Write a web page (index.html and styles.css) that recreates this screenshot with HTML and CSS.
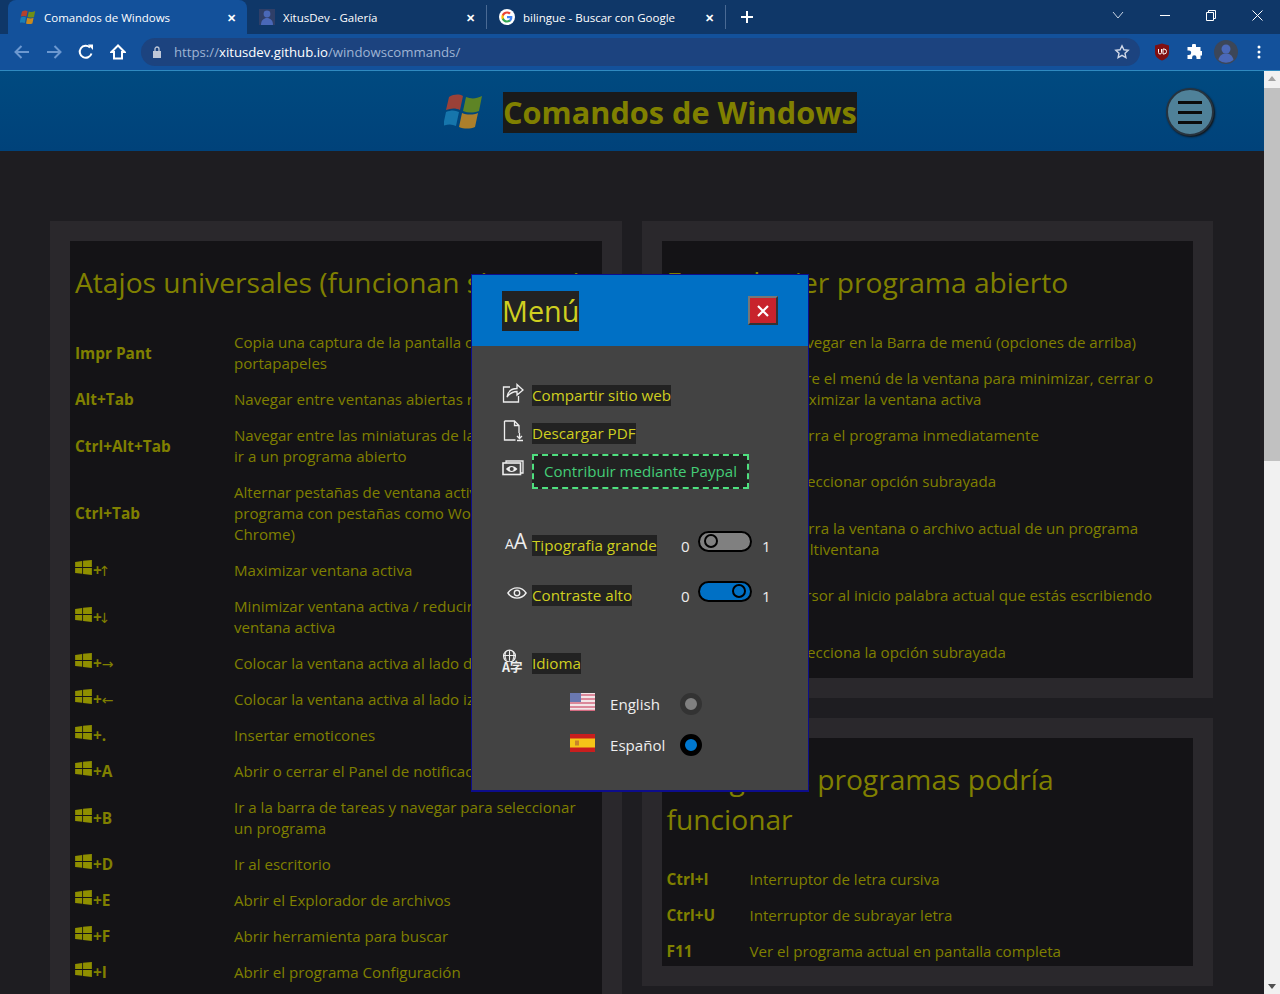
FILE: index.html
```html
<!DOCTYPE html>
<html lang="es">
<head>
    <meta charset="UTF-8">
    <meta name="viewport" content="width=device-width, initial-scale=1.0">
    <title>Comandos de Windows</title>
    <link rel="stylesheet" href="styles.css">
</head>
<body>
    <svg class="defs" width="0" height="0">
        <symbol id="winkey" viewBox="0 0 19 17">
            <path d="M0 2.2 8 1v7H0zM9 .9 19 0v8H9zM0 9h8v6.6L0 14.6zM9 9h10v8L9 15.8z"/>
        </symbol>
        <symbol id="winlogo" viewBox="0 0 40 38">
            <path fill="#b5412c" d="M5 5c5-3 10-3 14-1l-3 14c-4-2-9-2-14 0z"/>
            <path fill="#6f8f16" d="M22 5c5 2 10 2 16-1l-3 15c-6 2-11 2-16 0z"/>
            <path fill="#1a7fb5" d="M2 20c5-2 9-2 13 0l-3 14c-4-2-8-2-13 0z"/>
            <path fill="#c98a1e" d="M18 21c5 2 11 2 16 0l-3 14c-5 2-11 2-16 0z"/>
        </symbol>
    </svg>

    <div class="tabstrip">
        <div class="tab active">
            <svg class="favicon" viewBox="0 0 40 38"><use href="#winlogo"/></svg>
            <span class="tab-title">Comandos de Windows</span>
            <span class="tab-close">✕</span>
        </div>
        <div class="tab">
            <svg class="favicon" viewBox="0 0 16 16"><rect width="16" height="16" fill="#2f3f68"/><circle cx="8" cy="5" r="3.4" fill="#4a68b8"/><path fill="#4a68b8" d="M2 16c0-5 3-7 6-7s6 2 6 7z"/></svg>
            <span class="tab-title">XitusDev - Galería</span>
            <span class="tab-close">✕</span>
        </div>
        <div class="tab sep">
            <svg class="favicon" viewBox="0 0 18 18">
                <circle cx="9" cy="9" r="9" fill="#fff"/>
                <path fill="#4285f4" d="M15 9.2c0-.5 0-.9-.1-1.3H9v2.5h3.4c-.2.8-.6 1.4-1.3 1.9v1.6h2.1c1.2-1.1 1.8-2.8 1.8-4.7z"/>
                <path fill="#34a853" d="M9 15.3c1.7 0 3.1-.6 4.2-1.5l-2.1-1.6c-.6.4-1.3.6-2.1.6-1.6 0-3-1.1-3.5-2.6H3.3v1.6c1.1 2.1 3.2 3.5 5.7 3.5z"/>
                <path fill="#fbbc05" d="M5.5 10.200c-.3-.8-.3-1.600 0-2.400V6.200H3.300c-.8 1.700-.8 3.800 0 5.600z"/>
                <path fill="#ea4335" d="M9 5.200c.9 0 1.800.3 2.400.9l1.900-1.900C12.200 3.200 10.700 2.600 9 2.700c-2.500 0-4.600 1.400-5.700 3.500l2.200 1.600C6 6.300 7.400 5.200 9 5.200z"/>
            </svg>
            <span class="tab-title">bilingue - Buscar con Google</span>
            <span class="tab-close">✕</span>
        </div>
        <div class="new-tab">
            <svg width="14" height="14" viewBox="0 0 14 14"><path d="M7 1v12M1 7h12" stroke="#fff" stroke-width="2"/></svg>
        </div>
        <div class="win-controls">
            <svg width="12" height="8" viewBox="0 0 12 8"><path d="M1 1l5 6 5-6" fill="none" stroke="#c8d4e4"/></svg>
            <svg width="10" height="10" viewBox="0 0 10 10"><path d="M0 5.500h10" stroke="#fff"/></svg>
            <svg width="10" height="11" viewBox="0 0 10 11"><path d="M.5 2.500h7v8h-7zM2.500 2.500v-2h7v8h-2" fill="none" stroke="#fff"/></svg>
            <svg width="11" height="11" viewBox="0 0 11 11"><path d="M.5.5l10 10M10.500.5l-10 10" stroke="#fff"/></svg>
        </div>
    </div>

    <div class="toolbar">
        <div class="nav-icons">
            <svg width="16" height="14" viewBox="0 0 16 14"><path d="M15 7H2M7.500 1 1.500 7l6 6" fill="none" stroke="#6c98d0" stroke-width="2"/></svg>
            <svg width="16" height="14" viewBox="0 0 16 14"><path d="M1 7h13M8.500 1l6 6-6 6" fill="none" stroke="#6c98d0" stroke-width="2"/></svg>
            <svg width="16" height="16" viewBox="0 0 16 16"><path d="M13.500 9.500A6 6 0 1 1 12 3.500" fill="none" stroke="#fff" stroke-width="2"/><path fill="#fff" d="M10 .5h5v5.500z"/></svg>
            <svg width="16" height="16" viewBox="0 0 16 16"><path d="M8 1.500 1.500 8H4v6.500h8V8h2.500z" fill="none" stroke="#fff" stroke-width="2"/></svg>
        </div>
        <div class="omnibox">
            <svg class="lock" width="10" height="12" viewBox="0 0 10 12"><path fill="#c0c8d8" d="M1 5h8v7H1z"/><path d="M3 5V3a2 2 0 0 1 4 0v2" fill="none" stroke="#c0c8d8" stroke-width="1.300"/></svg>
            <span class="url">https://<b>xitusdev.github.io</b>/windowscommands/</span>
            <svg class="star" width="16" height="16" viewBox="0 0 16 16"><path d="M8 1.800l1.900 4 4.300.5-3.200 3 .9 4.300L8 11.400l-3.900 2.200.9-4.300-3.200-3 4.300-.5z" fill="none" stroke="#d0d8e8" stroke-width="1.400"/></svg>
        </div>
        <div class="ext-icons">
            <svg width="16" height="18" viewBox="0 0 16 18"><path fill="#800f12" d="M8 .5 15 2.500v7c0 4-3 6.500-7 8-4-1.500-7-4-7-8v-7z"/><path d="M4.500 6v3.500a1.500 1.500 0 0 0 3 0V6M9 6v5h1a2.500 2.500 0 0 0 0-5z" fill="none" stroke="#fff"/></svg>
            <svg width="16" height="16" viewBox="0 0 16 16"><path fill="#fff" d="M6 1.500a2 2 0 0 1 4 0V3h4.500v4H16a2.200 2.200 0 0 1 0 4.400h-1.500V15H10.500v-1.500a2.200 2.200 0 0 0-4.400 0V15H1.500v-4H3a2.200 2.200 0 0 0 0-4.400H1.500V3H6z"/></svg>
            <svg class="ext-avatar" width="24" height="24" viewBox="0 0 24 24"><circle cx="12" cy="12" r="12" fill="#3c4658"/><circle cx="12" cy="9" r="4.500" fill="#4a68b8"/><path fill="#4a68b8" d="M4.500 20c1-5 4-6.500 7.500-6.500s6.500 1.500 7.500 6.500a12 12 0 0 1-15 0z"/></svg>
            <svg width="4" height="14" viewBox="0 0 4 14"><circle cx="2" cy="2" r="1.500" fill="#fff"/><circle cx="2" cy="7" r="1.500" fill="#fff"/><circle cx="2" cy="12" r="1.500" fill="#fff"/></svg>
        </div>
    </div>

    <div class="viewport">
        <div class="page">
            <header class="site-header">
                <svg class="site-logo" viewBox="0 0 40 38"><use href="#winlogo"/></svg>
                <h1 class="site-title">Comandos de Windows</h1>
                <button class="burger"><span></span><span></span><span></span></button>
            </header>

            <main class="columns">
                <div class="column">
                    <section class="card">
                        <div class="card-inner">
                            <h2>Atajos universales (funcionan siempre)</h2>
                            <table class="keys wide">
                                <tr><th>Impr Pant</th><td>Copia una captura de la pantalla completa al<br>portapapeles</td></tr>
                                <tr><th>Alt+Tab</th><td>Navegar entre ventanas abiertas recientes</td></tr>
                                <tr><th>Ctrl+Alt+Tab</th><td>Navegar entre las miniaturas de las ventanas para<br>ir a un programa abierto</td></tr>
                                <tr><th>Ctrl+Tab</th><td>Alternar pestañas de ventana activa en un<br>programa con pestañas como Word, Firefox o<br>Chrome)</td></tr>
                                <tr><th><svg class="win"><use href="#winkey"/></svg>+<span class="arrow v">↑</span></th><td>Maximizar ventana activa</td></tr>
                                <tr><th><svg class="win"><use href="#winkey"/></svg>+<span class="arrow v">↓</span></th><td>Minimizar ventana activa / reducir tamaño de<br>ventana activa</td></tr>
                                <tr><th><svg class="win"><use href="#winkey"/></svg>+<span class="arrow">→</span></th><td>Colocar la ventana activa al lado derecho</td></tr>
                                <tr><th><svg class="win"><use href="#winkey"/></svg>+<span class="arrow">←</span></th><td>Colocar la ventana activa al lado izquierdo</td></tr>
                                <tr><th><svg class="win"><use href="#winkey"/></svg>+.</th><td>Insertar emoticones</td></tr>
                                <tr><th><svg class="win"><use href="#winkey"/></svg>+A</th><td>Abrir o cerrar el Panel de notificaciones</td></tr>
                                <tr><th><svg class="win"><use href="#winkey"/></svg>+B</th><td>Ir a la barra de tareas y navegar para seleccionar<br>un programa</td></tr>
                                <tr><th><svg class="win"><use href="#winkey"/></svg>+D</th><td>Ir al escritorio</td></tr>
                                <tr><th><svg class="win"><use href="#winkey"/></svg>+E</th><td>Abrir el Explorador de archivos</td></tr>
                                <tr><th><svg class="win"><use href="#winkey"/></svg>+F</th><td>Abrir herramienta para buscar</td></tr>
                                <tr><th><svg class="win"><use href="#winkey"/></svg>+I</th><td>Abrir el programa Configuración</td></tr>
                            </table>
                        </div>
                    </section>
                </div>

                <div class="column">
                    <section class="card">
                        <div class="card-inner">
                            <h2>En cualquier programa abierto</h2>
                            <table class="keys medium">
                                <tr><th>Alt</th><td>Navegar en la Barra de menú (opciones de arriba)</td></tr>
                                <tr><th>Alt+Espacio</th><td>Abre el menú de la ventana para minimizar, cerrar o<br>maximizar la ventana activa</td></tr>
                                <tr><th>Alt+F4</th><td>Cierra el programa inmediatamente</td></tr>
                                <tr class="tall"><th>Alt+Letra</th><td>Seleccionar opción subrayada</td></tr>
                                <tr><th>Ctrl+F4</th><td>Cierra la ventana o archivo actual de un programa<br>multiventana</td></tr>
                                <tr class="tall"><th>Ctrl+Retroceso</th><td>Cursor al inicio palabra actual que estás escribiendo</td></tr>
                                <tr class="tall"><th>Enter</th><td>Selecciona la opción subrayada</td></tr>
                            </table>
                        </div>
                    </section>
                    <section class="card">
                        <div class="card-inner">
                            <h2>En algunos programas podría<br>funcionar</h2>
                            <table class="keys narrow">
                                <tr><th>Ctrl+I</th><td>Interruptor de letra cursiva</td></tr>
                                <tr><th>Ctrl+U</th><td>Interruptor de subrayar letra</td></tr>
                                <tr><th>F11</th><td>Ver el programa actual en pantalla completa</td></tr>
                            </table>
                        </div>
                    </section>
                </div>
            </main>

            <aside class="menu">
                <div class="menu-head">
                    <h2 class="menu-title">Menú</h2>
                    <button class="menu-close">
                        <svg width="12" height="12" viewBox="0 0 12 12"><path d="M1 1l10 10M11 1 1 11" stroke="#fff" stroke-width="2.200"/></svg>
                    </button>
                </div>
                <div class="menu-body">
                    <div class="menu-links">
                        <div class="menu-row">
                            <svg class="mi" viewBox="0 0 22 22"><path d="M8 5H1.500v15h15v-6" fill="none" stroke="#eee" stroke-width="1.300"/><path d="M5 15c1-6 5-8.500 10-8.500V2.500l6 5.500-6 5V9.500c-4 0-7 1.500-10 5.500z" fill="none" stroke="#eee" stroke-width="1.300"/></svg>
                            <span class="label">Compartir sitio web</span>
                        </div>
                        <div class="menu-row">
                            <svg class="mi" viewBox="0 0 22 22"><path d="M2.500 1v19h11M2.500 1h10l4.500 4.500V13M12.500 1v4.500H17" fill="none" stroke="#eee" stroke-width="1.300"/><path d="M17.500 13v5.500M15 16l2.500 2.500L20 16M15 20.500h6" fill="none" stroke="#eee" stroke-width="1.300"/></svg>
                            <span class="label">Descargar PDF</span>
                        </div>
                        <div class="menu-row paypal-row">
                            <svg class="mi" viewBox="0 0 22 22"><path d="M4 5V3h17v12h-2" fill="none" stroke="#eee" stroke-width="1.300"/><rect x="1" y="5" width="17.500" height="11.500" fill="none" stroke="#eee" stroke-width="1.600"/><path d="M4 11c3-4 8-4 11.500 0-3.500 4-8.500 4-11.500 0z" fill="#eee"/><circle cx="9.700" cy="11" r="2" fill="#434343"/></svg>
                            <a class="paypal">Contribuir mediante Paypal</a>
                        </div>
                    </div>

                    <div class="menu-switches">
                        <div class="menu-row switch-row">
                            <span class="mi-text"><small>A</small>A</span>
                            <span class="label">Tipografia grande</span>
                            <span class="switch-off">0</span>
                            <span class="switch"><i></i></span>
                            <span class="switch-on">1</span>
                        </div>
                        <div class="menu-row switch-row">
                            <svg class="mi eye" viewBox="0 0 22 14"><path d="M1 7c5-7.500 15-7.500 20 0-5 7.500-15 7.500-20 0z" fill="none" stroke="#eee" stroke-width="1.500"/><circle cx="11" cy="7" r="3" fill="none" stroke="#eee" stroke-width="1.500"/></svg>
                            <span class="label">Contraste alto</span>
                            <span class="switch-off">0</span>
                            <span class="switch on"><i></i></span>
                            <span class="switch-on">1</span>
                        </div>
                    </div>

                    <div class="menu-row idioma">
                        <span class="globe-icon">
                            <svg width="15" height="13" viewBox="0 0 14 12"><circle cx="7" cy="6.500" r="5.500" fill="none" stroke="#eee" stroke-width="1.200"/><path d="M1 6h12M7 1v10M4 2c-1.500 2-1.500 6 0 8M10 2c1.500 2 1.500 6 0 8" fill="none" stroke="#eee"/></svg>
                            <span>A字</span>
                        </span>
                        <span class="label">Idioma</span>
                    </div>

                    <div class="lang">
                        <svg class="flag" viewBox="0 0 25 18">
                            <rect width="25" height="18" fill="#f3e6e8"/>
                            <path d="M0 2h25M0 6h25M0 10h25M0 14h25M0 17.500h25" stroke="#d46a80" stroke-width="1.600"/>
                            <rect width="11" height="9" fill="#6a78b0"/>
                        </svg>
                        <span class="lang-name">English</span>
                        <span class="radio"></span>
                    </div>
                    <div class="lang">
                        <svg class="flag" viewBox="0 0 25 18">
                            <rect width="25" height="18" fill="#c81e1e"/>
                            <rect y="4.500" width="25" height="9" fill="#f5c518"/>
                            <rect x="5" y="6.500" width="4" height="5" fill="#c8842a"/>
                        </svg>
                        <span class="lang-name">Español</span>
                        <span class="radio on"></span>
                    </div>
                </div>
            </aside>
        </div>

        <div class="scrollbar">
            <span class="scroll-up"></span>
            <div class="scroll-thumb"></div>
            <span class="scroll-down"></span>
        </div>
    </div>
</body>
</html>
```

FILE: styles.css
```css
html, body {
    margin: 0;
    height: 994px;
    overflow: hidden;
}
body {
    font-family: "Open Sans", "Noto Sans", sans-serif;
    font-size: 15.1px;
    background-color: #1e1d21;
    color: #808000;
}
.defs {
    position: absolute;
}

/* browser */
.tabstrip {
    display: flex;
    height: 34px;
    padding-left: 8px;
    background-color: #0f3768;
    color: white;
    font-size: 11.5px;
}
.tab {
    width: 239px;
    height: 34px;
    box-sizing: border-box;
    display: flex;
    align-items: center;
    padding: 0 11px 0 12px;
}
.tab.active {
    background-color: #13519b;
    border-radius: 8px 8px 0 0;
}
.tab.sep {
    border-left: 1px solid #4a6a94;
    height: 24px;
    margin-top: 5px;
}
.favicon {
    width: 16px;
    height: 16px;
    margin-right: 8px;
}
.tab-title {
    flex: 1;
}
.tab-close {
    font-size: 11px;
    font-weight: bold;
}
.new-tab {
    width: 42px;
    display: flex;
    align-items: center;
    justify-content: center;
    border-left: 1px solid #4a6a94;
    height: 24px;
    margin-top: 5px;
}
.win-controls {
    margin-left: auto;
    display: flex;
    gap: 36px;
    align-items: center;
    padding: 0 17px 4px 0;
}
.toolbar {
    display: flex;
    align-items: center;
    height: 36px;
    background-color: #13519b;
    border-bottom: 1px solid #2f8ac0;
}
.nav-icons {
    display: flex;
    justify-content: space-between;
    align-items: center;
    width: 112px;
    margin: 0 15px 0 14px;
}
.omnibox {
    width: 999px;
    height: 28px;
    display: flex;
    align-items: center;
    background-color: #1c437f;
    border-radius: 14px;
    color: #9fb4d4;
    font-size: 13.2px;
}
.lock {
    margin: 0 12px 0 11px;
}
.url {
    flex: 1;
}
.url b {
    color: white;
    font-weight: normal;
}
.star {
    margin-right: 10px;
}
.ext-icons {
    display: flex;
    align-items: center;
    gap: 16px;
    margin-left: 14px;
}
.ext-avatar {
    margin: 0 3px 0 -4px;
}

/* page */
.viewport {
    display: flex;
    height: 923px;
}
.page {
    position: relative;
    flex: 1;
    overflow: hidden;
}
.site-header {
    display: flex;
    align-items: center;
    height: 80px;
    padding-left: 444px;
    background: linear-gradient(#004a80, #00427a);
}
.site-logo {
    width: 40px;
    height: 38px;
    margin-right: 19px;
    opacity: .85;
}
.site-title {
    margin: 3px 0 0;
    background-color: #1a1a1a;
    font-size: 30.7px;
    line-height: 41px;
    font-weight: bold;
    color: #808000;
}
.burger {
    margin: 2px 50px 0 auto;
    width: 48px;
    height: 48px;
    padding: 0 10px;
    display: flex;
    flex-direction: column;
    justify-content: center;
    gap: 7px;
    background-color: #4f8199;
    border: 2px solid #26333f;
    border-radius: 50%;
    box-shadow: 1px 1px 2px #111;
}
.burger span {
    display: block;
    height: 3px;
    background-color: #0c0c0c;
}
.columns {
    display: flex;
    gap: 20px;
    padding: 70px 51px 0 50px;
}
.column {
    flex: 1;
    display: flex;
    flex-direction: column;
    gap: 20px;
}
.card {
    padding: 20px;
    background-color: #2a282c;
}
.card-inner {
    display: flow-root;
    background-color: #141316;
    padding: 21px 0 0 5px;
}
.card-inner h2 {
    margin: 0 0 22px;
    font-size: 28.2px;
    line-height: 40px;
    font-weight: normal;
}
.keys {
    border-collapse: collapse;
    margin-bottom: -3px;
}
.keys.wide {
    margin-bottom: 30px;
}
.keys th {
    padding: 8px 0 7px;
    text-align: left;
    font-size: 15.4px;
    line-height: 21px;
    font-weight: bold;
    white-space: nowrap;
}
.keys td {
    padding: 8px 0 7px;
    line-height: 21px;
    white-space: nowrap;
}
.keys.wide th { width: 159px; }
.keys.medium th { width: 120px; }
.keys.narrow th { width: 83px; }
.keys tr.tall td {
    height: 42px;
    padding: 7px 0 8px;
}
.win {
    width: 17px;
    height: 15px;
    margin-right: 1px;
    fill: #8f8f00;
    vertical-align: 1px;
}
.arrow {
    font-family: "DejaVu Sans", sans-serif;
    font-size: 14px;
    font-weight: normal;
    line-height: 0;
}
.arrow.v {
    margin: 0 -3px;
}

/* menu */
.menu {
    position: absolute;
    left: 471px;
    top: 203px;
    width: 338px;
    height: 518px;
    box-sizing: border-box;
    border: 1px solid #0d0d8c;
    border-bottom-width: 2px;
    background-color: #434343;
}
.menu-head {
    display: flex;
    justify-content: space-between;
    align-items: center;
    height: 71px;
    padding: 0 30px;
    background-color: #0070c5;
}
.menu-title {
    margin: 0;
    background-color: #222;
    color: #cfcf20;
    font-size: 28.8px;
    line-height: 40px;
    font-weight: normal;
}
.menu-close {
    width: 30px;
    height: 29px;
    padding: 0;
    display: flex;
    align-items: center;
    justify-content: center;
    background-color: #c8232c;
    border: 2px solid;
    border-color: #777 #333 #333 #777;
}
.menu-body {
    padding: 39px 0 0 30px;
    color: #eee;
}
.menu-row {
    display: flex;
    align-items: center;
    gap: 8px;
}
.menu-links {
    display: flex;
    flex-direction: column;
    gap: 17px;
}
.mi {
    width: 22px;
    height: 22px;
    margin-top: -6px;
}
.label {
    background-color: #222;
    color: #cfcf20;
    font-size: 15.2px;
    line-height: 21px;
}
.paypal-row {
    margin-top: -7px;
}
.paypal {
    border: 2px dashed #4fdf7f;
    background-color: #222;
    color: #44cc77;
    padding: 5px 10px;
    line-height: 21px;
}
.menu-switches {
    margin-top: 46px;
    display: flex;
    flex-direction: column;
    gap: 29px;
}
.switch-row {
    height: 21px;
    gap: 0;
}
.switch-row .label {
    margin-left: 8px;
}
.switch-off {
    margin-left: auto;
    width: 9px;
}
.switch {
    width: 54px;
    height: 21px;
    box-sizing: border-box;
    border: 2px solid #000;
    border-radius: 11px;
    background-color: #808080;
    margin: -9px 10px 0 8px;
    display: flex;
    align-items: center;
    padding: 0 4px;
}
.switch i {
    width: 10px;
    height: 10px;
    border: 2px solid #000;
    border-radius: 50%;
    margin-bottom: 1px;
}
.switch.on {
    background-color: #0070c5;
    justify-content: flex-end;
}
.switch-on {
    width: 9px;
    margin-right: 37px;
}
.mi-text {
    width: 22px;
    margin: -6px -3px 0 3px;
    color: #eee;
    font-size: 21px;
    line-height: 22px;
    text-align: right;
    white-space: nowrap;
}
.mi-text small {
    font-size: 14px;
}
.eye {
    width: 20px;
    height: 14px;
    margin: -6px -3px 0 5px;
}
.idioma {
    margin-top: 47px;
}
.globe-icon {
    width: 22px;
    height: 24px;
    margin-top: -6px;
    display: flex;
    flex-direction: column;
    color: #eee;
    font-family: "Noto Sans CJK JP", sans-serif;
    font-size: 12.5px;
    font-weight: bold;
    line-height: 10px;
    white-space: nowrap;
}
.lang {
    display: flex;
    align-items: center;
    height: 22px;
    margin: 19px 0 0 68px;
}
.flag {
    width: 25px;
    height: 18px;
    margin: -4px 15px 0 0;
}
.lang-name {
    width: 70px;
    color: #eee;
}
.radio {
    width: 22px;
    height: 22px;
    box-sizing: border-box;
    border: 5px solid #333;
    border-radius: 50%;
    background-color: #808080;
}
.radio.on {
    border-color: #000;
    background-color: #0078d0;
}

/* scrollbar */
.scrollbar {
    width: 16px;
    background-color: #f1f1f1;
    display: flex;
    flex-direction: column;
    align-items: center;
}
.scroll-up {
    margin-top: 5px;
    border: 4px solid transparent;
    border-top: 0;
    border-bottom: 5px solid #a3a3a3;
}
.scroll-thumb {
    width: 16px;
    height: 373px;
    margin-top: 7px;
    background-color: #c1c1c1;
}
.scroll-down {
    margin-top: auto;
    margin-bottom: 5px;
    border: 4px solid transparent;
    border-bottom: 0;
    border-top: 5px solid #505050;
}
```
